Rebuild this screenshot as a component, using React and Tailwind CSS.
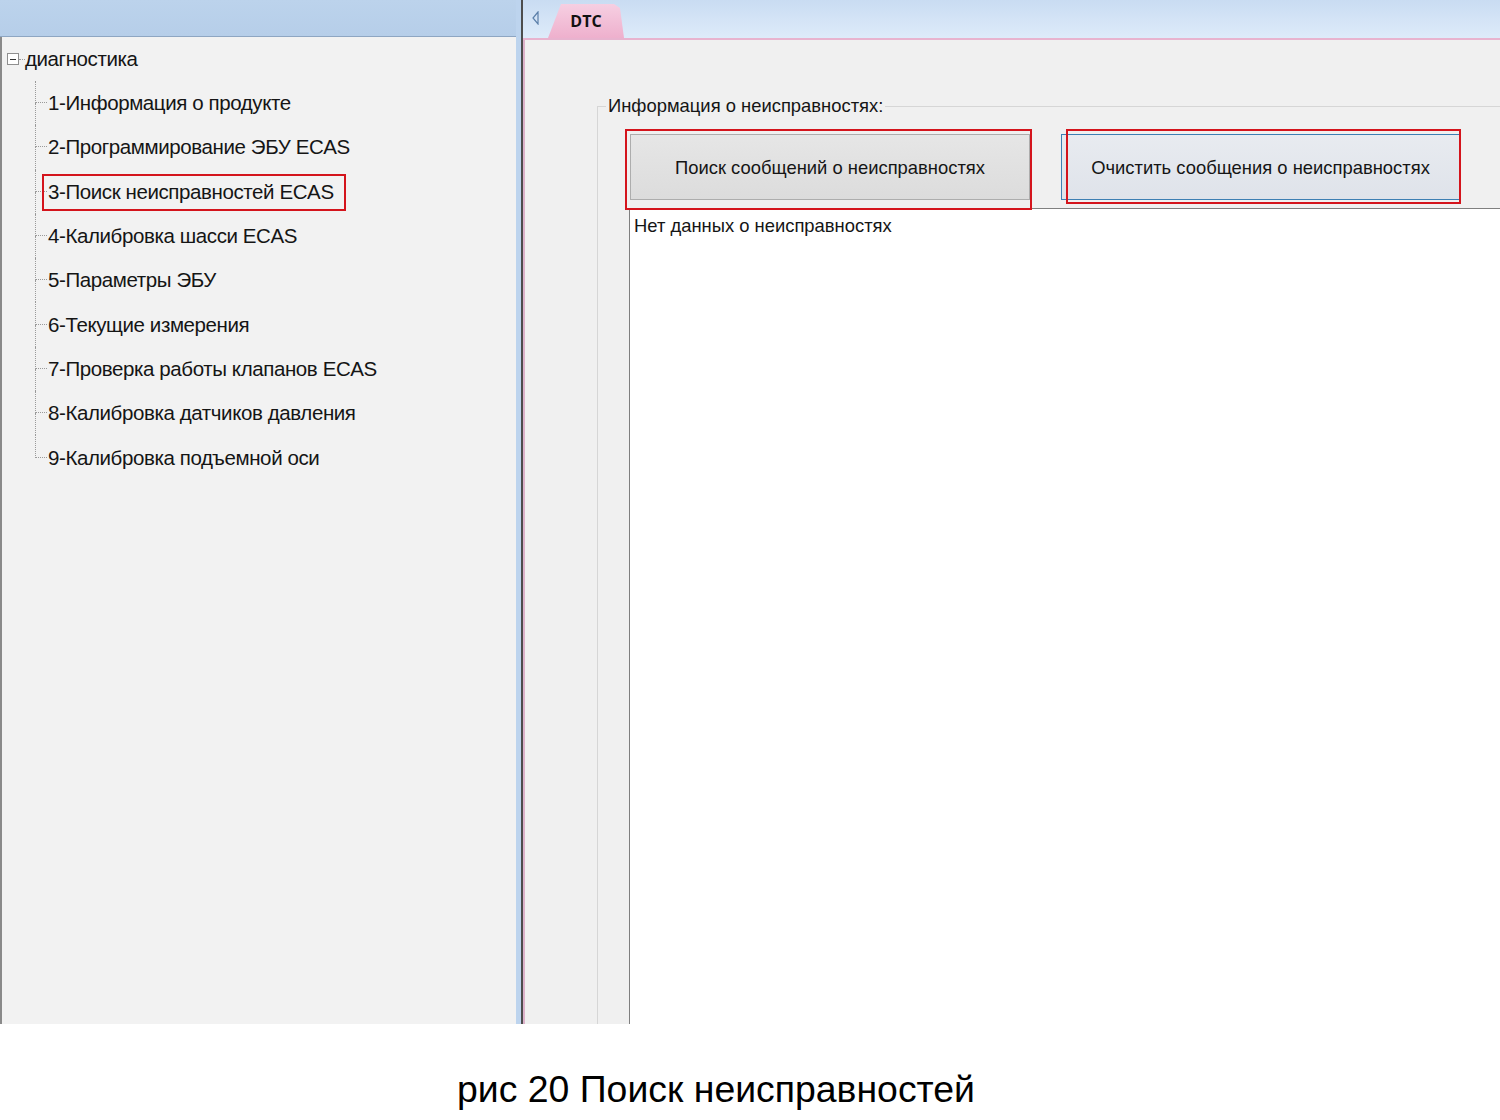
import React from "react";

const items = [
  "1-Информация о продукте",
  "2-Программирование ЭБУ ECAS",
  "3-Поиск неисправностей ECAS",
  "4-Калибровка шасси ECAS",
  "5-Параметры ЭБУ",
  "6-Текущие измерения",
  "7-Проверка работы клапанов ECAS",
  "8-Калибровка датчиков давления",
  "9-Калибровка подъемной оси",
];

function TreeRow({ label, last, marked }) {
  return (
    <div className="flex h-[44.3px] items-stretch">
      <div className="flex w-[12px] flex-col">
        <div className="h-1/2 border-b border-l border-dotted border-[#9a9a9a]" />
        <div
          className={
            last ? "h-1/2" : "h-1/2 border-l border-dotted border-[#9a9a9a]"
          }
        />
      </div>
      <div className="ml-px flex items-center">
        <span className="relative leading-[22px]">
          {label}
          {marked && (
            <span className="absolute -left-[6px] -right-[12px] -top-[7px] -bottom-[8px] border-2 border-[#d4141c]" />
          )}
        </span>
      </div>
    </div>
  );
}

export default function App() {
  return (
    <div className="flex h-[1120px] w-[1500px] flex-col bg-white font-['Liberation_Sans',Arial,sans-serif] text-[#151515]">
      <div className="flex h-[1024px]">
        {/* tree panel */}
        <div className="flex w-[516px] flex-col">
          <div className="h-[37px] border-b border-[#8ea6c2] bg-gradient-to-b from-[#bcd3ec] to-[#b6cee9]" />
          <div className="flex-1 border-l-2 border-[#8a8a8a] bg-[#f2f2f2] pl-[5px] text-[20.5px] tracking-[-0.4px]">
            <div className="flex h-[44px] items-center">
              <div className="flex h-[12px] w-[12px] items-center justify-center border border-[#8f8f8f] bg-white">
                <div className="h-px w-[6px] bg-[#333]" />
              </div>
              <div className="w-[6px] border-t border-dotted border-[#9a9a9a]" />
              <span>диагностика</span>
            </div>
            <div className="pl-[28px]">
              {items.map((t, i) => (
                <TreeRow
                  key={t}
                  label={t}
                  last={i === items.length - 1}
                  marked={i === 2}
                />
              ))}
            </div>
          </div>
        </div>

        {/* splitter */}
        <div className="w-[5px] bg-[#bdd4ee]" />
        <div className="w-[2px] bg-[#4d4d4d]" />

        {/* tab panel */}
        <div className="flex flex-1 flex-col">
          <div className="flex h-[38px] items-end bg-gradient-to-b from-[#c9dcf2] to-[#deebfa]">
            <svg
              width="10"
              height="14"
              viewBox="0 0 10 14"
              className="mb-[13px] ml-[8px]"
            >
              <path d="M7 1 L2 7 L7 13 Z" fill="none" stroke="#5b7fa9" strokeWidth="1.2" />
            </svg>
            <div className="ml-[7px] flex h-[34px] w-[76px] items-center justify-center bg-gradient-to-b from-[#f6cfe2] to-[#eeb0cd] font-['Open_Sans',sans-serif] text-[16px] font-bold text-[#111] [clip-path:polygon(13px_0,66px_0,72px_4px,76px_100%,0_100%)]">
              DTC
            </div>
          </div>
          <div className="h-[2px] bg-[#e8b3cf]" />
          <div className="flex flex-1 flex-col border-l-2 border-[#dcb2ca] bg-[#f0f0f0] pl-[72px] pt-[55px] text-[18.4px]">
            <fieldset className="flex flex-1 flex-col border-l border-t border-[#d6d6d6]">
              <legend className="ml-[8px] px-[2px] leading-[22px]">
                Информация о неисправностях:
              </legend>
              <div className="flex flex-1 flex-col pl-[31px] pt-[17px]">
                <div className="flex gap-[31px] pl-px">
                  <div className="relative flex h-[66px] w-[400px] items-center justify-center border border-[#adadad] bg-gradient-to-b from-[#e6e6e6] to-[#dcdcdc] pt-[2px]">
                    Поиск сообщений о неисправностях
                    <span className="absolute -left-[6px] -right-[3px] -top-[6px] -bottom-[11px] z-10 border-2 border-[#d4141c]" />
                  </div>
                  <div className="relative flex h-[66px] w-[399px] items-center justify-center border border-[#3d7fb3] bg-gradient-to-b from-[#e8ebf0] to-[#dfe3ea] pt-[2px]">
                    Очистить сообщения о неисправностях
                    <span className="absolute left-[4px] -right-[2px] -top-[6px] -bottom-[5px] border-2 border-[#d4141c]" />
                  </div>
                </div>
                <div className="mt-[8px] flex-1 border-l border-t border-[#7f7f7f] bg-white pl-[4px] pt-[3px]">
                  Нет данных о неисправностях
                </div>
              </div>
            </fieldset>
          </div>
        </div>
      </div>

      <div className="pl-[457px] pt-[43px] text-[37.4px] leading-[44px] text-black">
        рис 20 Поиск неисправностей
      </div>
    </div>
  );
}
